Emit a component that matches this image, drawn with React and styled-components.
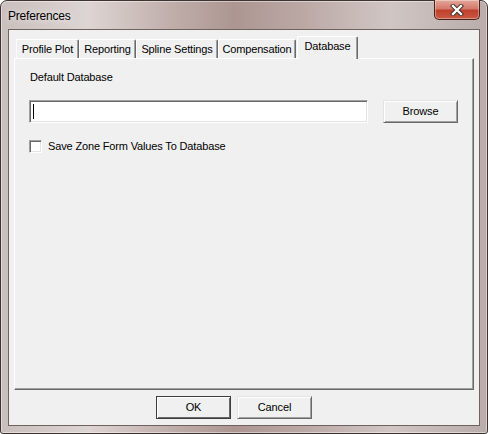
import React from 'react';
import styled, { createGlobalStyle } from 'styled-components';

const Global = createGlobalStyle`
  html, body { margin: 0; padding: 0; background: #fff; }
  * { box-sizing: border-box; }
`;

// window frame (aero glass look)
const Window = styled.div`
  width: 488px;
  height: 434px;
  border: 1px solid #3e3431;
  border-radius: 7px 7px 3px 3px;
  background: linear-gradient(90deg, #c9bfbd 0%, #ddd5d3 18%, #c0aeab 35%, #ad9692 48%, #bba8a5 62%, #d0c6c4 80%, #b9acaa 100%);
  box-shadow: inset 0 0 0 1px rgba(255,255,255,0.45);
  padding: 0 7px 7px 7px;
  display: flex;
  flex-direction: column;
  font-family: "Liberation Sans", Arial, sans-serif;
  letter-spacing: -0.15px;
`;

const TitleBar = styled.div`
  height: 28px;
  display: flex;
  align-items: flex-start;
  justify-content: space-between;
`;

const Title = styled.div`
  font-size: 12px;
  color: #000;
  margin: 8px 0 0 0;
  letter-spacing: -0.2px;
  text-shadow: 0 0 6px rgba(255,255,255,0.9);
`;

const CloseButton = styled.div`
  width: 46px;
  height: 20px;
  margin-top: -1px;
  border: 1px solid #4b211c;
  border-top: none;
  border-radius: 0 0 5px 5px;
  background: linear-gradient(180deg, #e3a89c 0%, #d47a6a 45%, #c0402c 55%, #c95a44 100%);
  box-shadow: inset 0 0 0 1px rgba(255,255,255,0.35);
  display: flex;
  align-items: center;
  justify-content: center;
`;

const Client = styled.div`
  flex: 1;
  border: 1px solid #6f625f;
  background: #f0f0f0;
  display: flex;
  flex-direction: column;
  padding: 6px 5px 0 5px;
`;

const TabRow = styled.div`
  height: 22px;
  display: flex;
  align-items: flex-end;
  padding-left: 2px;
  position: relative;
  z-index: 1;
`;

const Tab = styled.div`
  width: ${p => p.$w}px;
  height: ${p => (p.$active ? 23 : 19)}px;
  margin-bottom: ${p => (p.$active ? -1 : 0)}px;
  margin-left: ${p => (p.$active ? 1 : 0)}px;
  background: #f0f0f0;
  border-top: 1px solid #ffffff;
  border-left: 1px solid #ffffff;
  border-right: 1px solid #696969;
  box-shadow: inset -1px 0 0 #a0a0a0;
  border-radius: 2px 2px 0 0;
  font-size: 11px;
  color: #000;
  text-align: center;
  padding-top: 3px;
  white-space: nowrap;
`;

const Panel = styled.div`
  height: 332px;
  border-top: 1px solid #ffffff;
  border-left: 1px solid #ffffff;
  border-right: 1px solid #696969;
  border-bottom: 1px solid #696969;
  box-shadow: inset -1px -1px 0 #a0a0a0;
  background: #f0f0f0;
  padding: 12px 14px 0 14px;
  display: flex;
  flex-direction: column;
`;

const Label = styled.div`
  font-size: 11px;
  line-height: 13px;
  color: #000;
  padding-left: 1px;
`;

const FieldRow = styled.div`
  display: flex;
  align-items: flex-start;
  margin-top: 16px;
`;

const TextBox = styled.div`
  width: 339px;
  height: 23px;
  background: #fff;
  border-top: 1px solid #a0a0a0;
  border-left: 1px solid #a0a0a0;
  border-right: 1px solid #ffffff;
  border-bottom: 1px solid #ffffff;
  box-shadow: inset 1px 1px 0 #696969, inset -1px -1px 0 #e3e3e3;
  padding: 3px 0 0 3px;
`;

const Caret = styled.div`
  width: 1px;
  height: 15px;
  background: #000;
`;

const Button = styled.div`
  width: ${p => p.$w}px;
  height: 23px;
  margin-left: ${p => p.$ml || 0}px;
  background: #f0f0f0;
  border-top: 1px solid ${p => (p.$default ? '#3c3c3c' : '#e3e3e3')};
  border-left: 1px solid ${p => (p.$default ? '#3c3c3c' : '#e3e3e3')};
  border-right: 1px solid ${p => (p.$default ? '#3c3c3c' : '#696969')};
  border-bottom: 1px solid ${p => (p.$default ? '#3c3c3c' : '#696969')};
  box-shadow: ${p => (p.$default
    ? 'inset 1px 1px 0 #ffffff, inset -1px -1px 0 #696969'
    : 'inset 1px 1px 0 #ffffff, inset -1px -1px 0 #a0a0a0')};
  font-size: 11px;
  color: #000;
  display: flex;
  align-items: center;
  justify-content: center;
  padding-bottom: 1px;
`;

const CheckRow = styled.div`
  display: flex;
  align-items: center;
  margin-top: 17px;
  gap: 5px;
`;

const CheckBox = styled.div`
  width: 13px;
  height: 13px;
  background: #fff;
  border-top: 1px solid #a0a0a0;
  border-left: 1px solid #a0a0a0;
  border-right: 1px solid #ffffff;
  border-bottom: 1px solid #ffffff;
  box-shadow: inset 1px 1px 0 #696969, inset -1px -1px 0 #e3e3e3;
`;

const ButtonBar = styled.div`
  display: flex;
  padding: 6px 0 0 142px;
`;

const tabs = [
  { name: 'Profile Plot', w: 63 },
  { name: 'Reporting', w: 57 },
  { name: 'Spline Settings', w: 82 },
  { name: 'Compensation', w: 78 },
  { name: 'Database', w: 61, active: true },
];

export default function App() {
  return (
    <>
      <Global />
      <Window>
        <TitleBar>
          <Title>Preferences</Title>
          <CloseButton>
            <svg width="14" height="12" viewBox="0 0 14 12">
              <path d="M3 2 L11 10 M11 2 L3 10" stroke="#3a2a28" strokeWidth="4.2" strokeLinecap="square" />
              <path d="M3 2 L11 10 M11 2 L3 10" stroke="#ffffff" strokeWidth="2.4" strokeLinecap="square" />
            </svg>
          </CloseButton>
        </TitleBar>
        <Client>
          <TabRow>
            {tabs.map(t => (
              <Tab key={t.name} $w={t.w} $active={t.active}>{t.name}</Tab>
            ))}
          </TabRow>
          <Panel>
            <Label>Default Database</Label>
            <FieldRow>
              <TextBox><Caret /></TextBox>
              <Button $w={75} $ml={15}>Browse</Button>
            </FieldRow>
            <CheckRow>
              <CheckBox />
              <Label>Save Zone Form Values To Database</Label>
            </CheckRow>
          </Panel>
          <ButtonBar>
            <Button $w={75} $default>OK</Button>
            <Button $w={75} $ml={6}>Cancel</Button>
          </ButtonBar>
        </Client>
      </Window>
    </>
  );
}
